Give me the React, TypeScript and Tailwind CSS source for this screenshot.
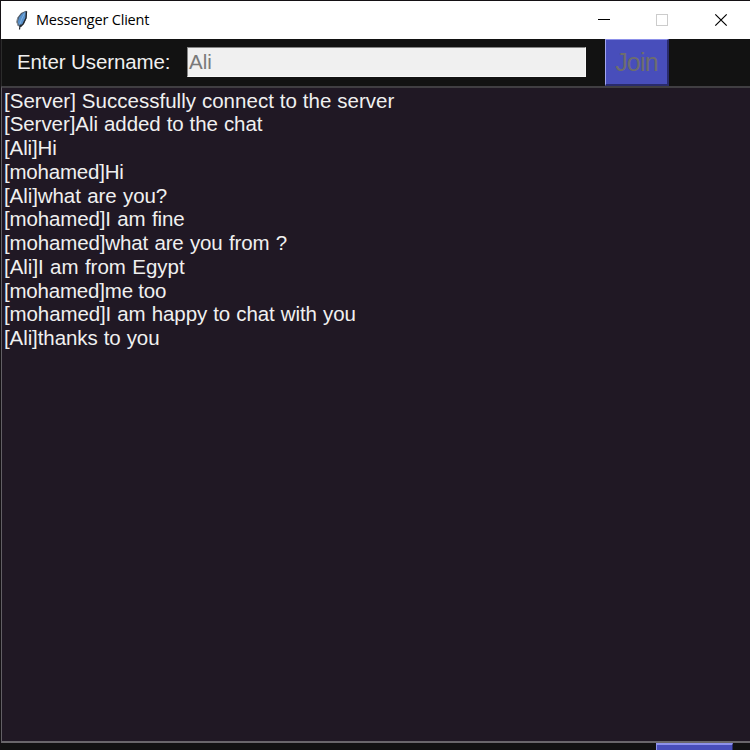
const messages = [
  { text: '[Server] Successfully connect to the server', spacing: 'tracking-[0.02px] [word-spacing:0.2px]' },
  { text: '[Server]Ali added to the chat', spacing: 'tracking-[-0.05px] [word-spacing:0.3px]' },
  { text: '[Ali]Hi', spacing: 'tracking-[-0.12px]' },
  { text: '[mohamed]Hi', spacing: 'tracking-[-0.2px]' },
  { text: '[Ali]what are you?', spacing: 'tracking-[-0.08px] [word-spacing:0.8px]' },
  { text: '[mohamed]I am fine', spacing: 'tracking-[-0.14px] [word-spacing:0.9px]' },
  { text: '[mohamed]what are you from ?', spacing: 'tracking-[-0.14px] [word-spacing:0.8px]' },
  { text: '[Ali]I am from Egypt', spacing: 'tracking-[-0.02px] [word-spacing:0.7px]' },
  { text: '[mohamed]me too', spacing: 'tracking-[-0.2px]' },
  { text: '[mohamed]I am happy to chat with you', spacing: 'tracking-[-0.11px] [word-spacing:0.6px]' },
  { text: '[Ali]thanks to you', spacing: 'tracking-[-0.09px] [word-spacing:0.5px]' },
];

function Feather() {
  return (
    <svg className="ml-[14px] h-[21px] w-[14px] shrink-0" viewBox="0 0 14 21">
      <path d="M11 .7 12 1.2 11.6 8 9 14 5.7 17 3 16 1.5 12 2.5 7.5 6 3Z" fill="#4c5663" />
      <path d="M10.5 1.5 10.7 7.5 7.8 13.5 4.2 16 2.8 12 4 7.5 7 3.7Z" fill="#578fc9" />
      <path d="M9.4 3.5 6.5 9.5 4.3 15.5" fill="none" stroke="#7fb2e2" strokeWidth="1" />
      <path d="M11.6 1.5 11 8 8.2 13.8 5.6 16.7 M5.2 14.5 4.5 19.5" fill="none" stroke="#20252c" strokeWidth="1.2" />
      <path d="M2.3 9 1.8 12 3.2 16" fill="none" stroke="#8b9299" strokeWidth="1" />
    </svg>
  );
}

function TitleBar() {
  return (
    <header className="flex h-[38px] shrink-0 items-center bg-white text-black">
      <Feather />
      <h1 className="-mt-px ml-[7px] w-[114px] whitespace-nowrap font-['Open_Sans','Noto_Sans',sans-serif] text-[14.5px] leading-5 tracking-[-0.2px]">
        Messenger Client
      </h1>
      <div className="ml-auto mr-[6px] flex items-center">
        <svg className="h-[38px] w-[58px]" viewBox="0 0 58 38" shapeRendering="crispEdges">
          <path d="M17 18.5H29" stroke="#000" fill="none" />
        </svg>
        <svg className="h-[38px] w-[58px]" viewBox="0 0 58 38" shapeRendering="crispEdges">
          <path d="M17.5 13.5h11v11h-11z" stroke="#ccc" fill="none" />
        </svg>
        <svg className="h-[38px] w-[47px]" viewBox="0 0 47 38">
          <path d="m18.3 13.3 11.4 11.4m0-11.4L18.3 24.7" stroke="#000" strokeWidth="1.2" fill="none" />
        </svg>
      </div>
    </header>
  );
}

export default function App() {
  return (
    <div className="flex h-[750px] w-[750px] flex-col overflow-hidden border-l border-t border-[#141114] bg-[#121212] font-['Liberation_Sans',Arial,sans-serif]">
      <TitleBar />
      <div className="flex h-[47px] shrink-0 items-start border-l border-[#2b2b2b] bg-[#121212]">
        <label className="ml-[15px] mt-[11px] w-[170px] whitespace-nowrap text-[20.5px] leading-6 tracking-[-0.1px] text-[#f0f0f0]">
          Enter Username:
        </label>
        <div className="mt-2 h-[30px] w-[399px] border border-[#858585] border-b-[#f8f8f8] border-r-[#f8f8f8] bg-[#f0f0f0] pl-px text-[20.5px] leading-7 text-[#797979]">
          Ali
        </div>
        <button className="ml-[19px] h-[47px] w-[64px] border border-b-2 border-r-2 border-b-[#292b6c] border-l-[#a3a6ee] border-r-[#292b6c] border-t-[#8d91ea] bg-[#484ebb] text-[25px] leading-[45px] tracking-[-0.8px] text-[#6d6d6d]">
          Join
        </button>
      </div>
      <main className="h-[657px] shrink-0 border-b-2 border-l border-t-2 border-b-[#69666a] border-l-[#625f65] border-t-[#403e42] bg-[#201824] pl-[2px] pt-[0.5px]">
        {messages.map(({ text, spacing }) => (
          <p key={text} className={`h-[23.75px] whitespace-pre text-[20.5px] leading-[23.75px] text-[#f0f0f0] ${spacing}`}>
            {text}
          </p>
        ))}
      </main>
      <footer className="flex h-[7px] shrink-0 bg-[#121212]">
        <div className="ml-[655px] h-[7px] w-[77px] border-l border-r border-t-2 border-l-[#8d91ea] border-r-[#292b6c] border-t-[#8d91ea] bg-[#484ebb]" />
      </footer>
    </div>
  );
}
